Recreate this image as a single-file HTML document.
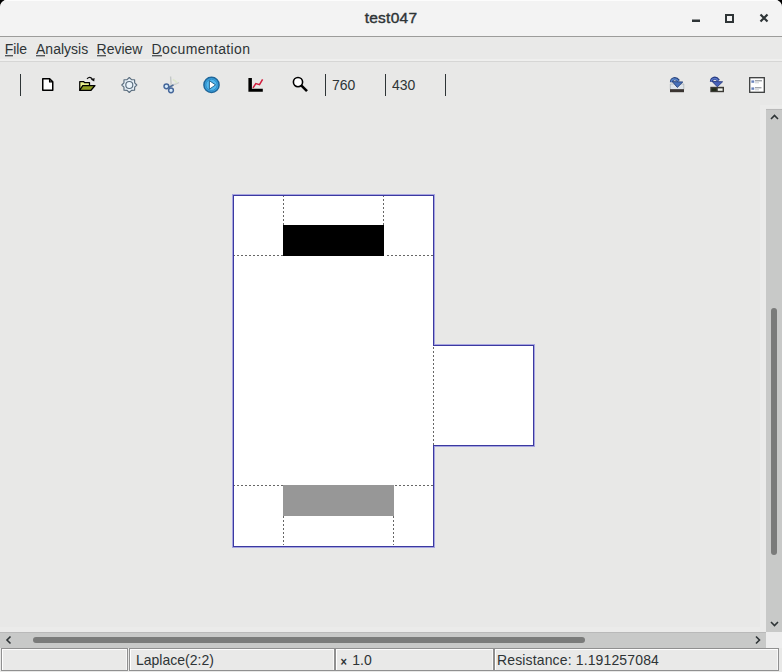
<!DOCTYPE html>
<html><head><meta charset="utf-8">
<style>
*{margin:0;padding:0;box-sizing:border-box}
html,body{width:782px;height:672px;overflow:hidden;background:#000}
body{position:relative;font-family:"Liberation Sans",sans-serif;color:#2e3436}
.a{position:absolute}
#win{position:absolute;left:0;top:0;width:782px;height:672px;background:#e8e8e7;border-radius:7px 7px 0 0;overflow:hidden}
#title{left:0;top:0;width:782px;height:37px;background:#f3f3f3;border-bottom:1px solid #9c9c9a;box-shadow:inset 0 1px 0 #fcfcfc}
#title .t{left:0;width:782px;top:9px;text-align:center;font-weight:normal;font-size:15.5px;line-height:17px;color:#2e3436;-webkit-text-stroke:0.4px #2e3436;letter-spacing:0.25px}
#menu{left:0;top:37px;width:782px;height:25px;background:#e9e9e8;border-bottom:1px solid #d6d6d5;box-shadow:inset 0 -2px 0 #efefee}
.mi{top:4px;font-size:14px;line-height:16px;color:#2e3436;transform:scaleY(1.1);transform-origin:0 12px}
.mi u{text-decoration:none;position:relative}.mi u::after{content:'';position:absolute;left:0;right:0.4px;top:13.9px;height:1.3px;background:#2e3436}
.sep{width:1px;background:#2e3436;top:74px;height:22px}
.num{top:76.6px;font-size:14px;line-height:16px;color:#2e3436;transform:scaleY(1.1);transform-origin:0 13px}
.st{top:648px;height:23px;border:1px solid #909090;box-shadow:inset 1px 1px 0 #fff,inset -1px 0 0 #f8f8f8;background:#e9e9e8}
.st span{position:absolute;top:2.7px;font-size:14px;line-height:16px;color:#2e3436;transform:scaleY(1.08);transform-origin:0 13px}
</style></head><body>
<div id="win">
  <div id="title" class="a"><div class="a t">test047</div>
    <svg class="a" style="left:680px;top:5px" width="102" height="25" viewBox="680 5 102 25">
      <rect x="692" y="19.5" width="8" height="2.5" fill="#2e3436"/>
      <rect x="726" y="15" width="7" height="7" fill="none" stroke="#2e3436" stroke-width="2"/>
      <path d="M760.5 14.5 L767.5 21.5 M767.5 14.5 L760.5 21.5" stroke="#2e3436" stroke-width="2.2"/>
    </svg>
  </div>
  <div id="menu" class="a">
    <div class="a mi" style="left:4.8px;letter-spacing:-0.1px"><u>F</u>ile</div>
    <div class="a mi" style="left:36px"><u>A</u>nalysis</div>
    <div class="a mi" style="left:96.5px"><u>R</u>eview</div>
    <div class="a mi" style="left:151.5px;letter-spacing:0.36px"><u>D</u>ocumentation</div>
  </div>
  <!-- toolbar -->
  <div class="a sep" style="left:20px"></div>
  <div class="a sep" style="left:325px"></div>
  <div class="a sep" style="left:385px"></div>
  <div class="a sep" style="left:445px"></div>
  <svg class="a" style="left:0;top:60px" width="782" height="48" viewBox="0 60 782 48">
    <!-- new doc -->
    <path d="M42.75 78.75 H49.6 L52.75 81.9 V90.25 H42.75 Z" fill="#fff" stroke="#000" stroke-width="1.5" stroke-linejoin="round"/>
    <path d="M49.6 78.75 V81.9 H52.75" fill="none" stroke="#000" stroke-width="1.3"/>
    <!-- open folder -->
    <path d="M79.75 90.25 V81.5 H83.5 L84.5 82.5 H89.5 V85.5 H83 L79.75 90.25 Z" fill="#e9f08e" stroke="#000" stroke-width="1.25" stroke-linejoin="round"/>
    <path d="M79.75 90.25 L83 85.5 H95 L91 90.25 Z" fill="#8f9d22" stroke="#000" stroke-width="1.25" stroke-linejoin="round"/>
    <path d="M87 78.8 Q89.8 75.8 92.4 79.2" fill="none" stroke="#111" stroke-width="1.2"/>
    <path d="M90.8 79.6 L94.6 77.9 L94.2 81.6 Z" fill="#111"/>
    <!-- gear -->
    <path d="M129.30 77.50 L131.52 79.64 L134.60 79.70 L134.66 82.78 L136.80 85.00 L134.66 87.22 L134.60 90.30 L131.52 90.36 L129.30 92.50 L127.08 90.36 L124.00 90.30 L123.94 87.22 L121.80 85.00 L123.94 82.78 L124.00 79.70 L127.08 79.64Z" fill="#e6eff7" stroke="#5a6d7e" stroke-width="1.15" stroke-linejoin="round"/>
    <circle cx="129.3" cy="85" r="3.5" fill="#eaf3fa" stroke="#5a6d7e" stroke-width="1.15"/>
    <!-- scissors -->
    <path d="M171.2 85.5 L170.6 76.5" fill="none" stroke="#c4c8c8" stroke-width="1.4"/>
    <path d="M171.5 85 Q176 84.5 179 82.5" fill="none" stroke="#c8cccc" stroke-width="1.4"/>
    <path d="M172.8 79.5 Q175.5 80.5 177 83" fill="none" stroke="#dde8cc" stroke-width="1.8"/>
    <path d="M168.5 87.5 L173.5 85" stroke="#4d6c96" stroke-width="1.5"/>
    <circle cx="166.4" cy="86.3" r="2.4" fill="#d6ebfa" stroke="#45669a" stroke-width="1.45"/>
    <circle cx="171" cy="90.3" r="2.4" fill="#d6ebfa" stroke="#45669a" stroke-width="1.45"/>
    <!-- play -->
    <circle cx="211.5" cy="84.9" r="7.6" fill="#3aa3e0" stroke="#20679a" stroke-width="1.5"/>
    <circle cx="211.5" cy="84.9" r="5.6" fill="#52b8ee" stroke="#2f86bf" stroke-width="0.8"/>
    <path d="M209.4 80.7 V89.2 L215.6 84.9 Z" fill="#fff" stroke="#1a5a86" stroke-width="0.9" stroke-linejoin="round"/>
    <!-- chart -->
    <path d="M248.4 78 H251.9 V88.8 H262.8 V91.8 H248.4 Z" fill="#000"/>
    <path d="M253 87.8 L255.8 83.6 L259.5 84.6 L262.6 79.3" fill="none" stroke="#d21e3e" stroke-width="1.5"/>
    <!-- magnifier -->
    <circle cx="298" cy="82.1" r="4.6" fill="#fff" stroke="#000" stroke-width="1.6"/>
    <path d="M301.2 85.4 L307 91.2" stroke="#000" stroke-width="2.6"/>
    <!-- import 1 -->
    <path d="M670.3 84 H683.8 V89.5 H670.3 Z" fill="#dfe4ea" stroke="#9aa2aa" stroke-width="0.6"/>
    <path d="M670 89.2 H684 V92.2 H670 Z" fill="#3a3431"/>
    <path d="M671.4 82.2 C671.4 78.4 675.8 77 678.6 81" fill="none" stroke="#27427c" stroke-width="3.1"/>
    <path d="M671.4 82 C671.4 78.8 675.6 77.6 678.2 81" fill="none" stroke="#5a86cc" stroke-width="1.4"/>
    <path d="M672.3 81.6 L682.8 82 L677.3 87.4 Z" fill="#4a72ba" stroke="#27427c" stroke-width="0.9" stroke-linejoin="round"/>
    <!-- import 2 -->
    <path d="M710.3 86.8 H724 V92.2 H710.3 Z" fill="#3b3a35"/>
    <path d="M711.6 88.4 H716.4 V90.8 H711.6 Z" fill="#1e2a16"/>
    <path d="M717.8 88.4 H722.6 V90.8 H717.8 Z" fill="#f2f5ef"/>
    <path d="M711.4 81.8 C711.4 78 715.8 76.6 718.6 80.6" fill="none" stroke="#263a80" stroke-width="3.1"/>
    <path d="M711.4 81.6 C711.4 78.4 715.6 77.2 718.2 80.6" fill="none" stroke="#5a78cc" stroke-width="1.4"/>
    <path d="M712.1 81.4 L722.6 81.8 L717.3 86.8 Z" fill="#4862b8" stroke="#263a80" stroke-width="0.9" stroke-linejoin="round"/>
    <!-- checklist -->
    <rect x="749.7" y="77.7" width="14.6" height="14.6" fill="#fff" stroke="#3a3c3c" stroke-width="1.3"/>
    <rect x="751.4" y="80.4" width="2.8" height="2.4" fill="#6a84bc"/>
    <rect x="751.4" y="87.4" width="2.8" height="2.4" fill="#6a84bc"/>
    <path d="M755 80.8 H762 M755 87.8 H761.5" stroke="#7a7f86" stroke-width="1"/>
    <path d="M755 82.8 H759 M755 89.8 H759" stroke="#c8ccd0" stroke-width="1"/>
  </svg>
  <div class="a num" style="left:332px">760</div>
  <div class="a num" style="left:392px">430</div>

  <!-- canvas drawing -->
  <svg class="a" style="left:0;top:0" width="782" height="672">
    <g shape-rendering="crispEdges">
    <path d="M232 194 H435 V344 H535 V447 H435 V548 H232 Z" fill="#a6a4e0"/>
    <path d="M233 195 H434 V345 H534 V446 H434 V547 H233 Z" fill="#fff"/>
    <rect x="283" y="225" width="101" height="31" fill="#000"/>
    <rect x="283" y="485" width="111" height="31" fill="#979797"/>
    <g stroke="#666" stroke-width="1" stroke-dasharray="2 2">
      <path d="M233 255.5 H283 M387 255.5 H433"/>
      <path d="M283.5 195 V225 M383.5 195 V225"/>
      <path d="M433.5 347 V445"/>
      <path d="M233 485.5 H283 M395 485.5 H433"/>
      <path d="M283.5 516 V545 M393.5 516 V545"/>
    </g>
    <path d="M233.5 195.5 H433.5 V345.5 H533.5 V445.5 H433.5 V546.5 H233.5 Z" fill="none" stroke="#3b39a0" stroke-width="1"/>
    </g>
  </svg>

  <!-- vertical scrollbar -->
  <div class="a" style="left:760px;top:105px;width:22px;height:3px;background:#ebebea"></div><div class="a" style="left:760px;top:105px;width:6px;height:527px;background:#ebebea"></div>
  <div class="a" style="left:766px;top:108px;width:16px;height:524px;background:#c8c9c8;border-top:1px solid #e8e8e7"></div><div class="a" style="left:766px;top:109px;width:16px;height:1px;background:#b9b9b9"></div>
  <div class="a" style="left:771px;top:308px;width:6px;height:247px;background:#7a7b7a;border-radius:3px"></div>
  <!-- horizontal scrollbar -->
  <div class="a" style="left:0;top:627px;width:766px;height:5px;background:#ebebea"></div>
  <div class="a" style="left:0;top:632px;width:766px;height:16px;background:#c8c9c8;border-top:1px solid #b9b9b9"></div>
  <div class="a" style="left:33px;top:637px;width:552px;height:6px;background:#7a7b7a;border-radius:3px"></div>
  <div class="a" style="left:766px;top:632px;width:16px;height:16px;background:#ededed"></div>
  <svg class="a" style="left:0;top:0" width="782" height="672">
    <g fill="none" stroke="#2e3436" stroke-width="1.6">
      <path d="M771 119 L774.5 115.5 L778 119"/>
      <path d="M771 622 L774.5 625.5 L778 622"/>
      <path d="M10.5 636.5 L7 640 L10.5 643.5"/>
      <path d="M756 636.5 L759.5 640 L756 643.5"/>
    </g>
  </svg>

  <!-- status bar -->
  <div class="a" style="left:0;top:648px;width:782px;height:24px;background:#e8e8e7"></div>
  <div class="a st" style="left:1px;width:127px"></div>
  <div class="a st" style="left:129px;width:206px"><span style="left:6px">Laplace(2:2)</span></div>
  <div class="a st" style="left:335px;width:159px"><span style="left:4.5px;font-size:11px;font-weight:bold;top:4.5px">×</span><span style="left:16.3px">1.0</span></div>
  <div class="a st" style="left:494px;width:285px"><span style="left:2px;letter-spacing:0.14px">Resistance: 1.191257084</span></div>
</div>
</body></html>
